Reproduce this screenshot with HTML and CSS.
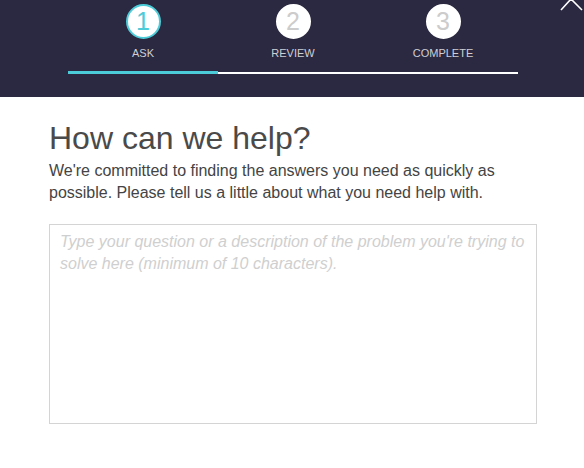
FILE: index.html
```html
<!DOCTYPE html>
<html>
<head>
<meta charset="utf-8">
<link rel="stylesheet" href="styles.css">
</head>
<body>
<header class="top">
  <div class="steps">
    <div class="step active">
      <div class="circle">1</div>
      <div class="label">ASK</div>
    </div>
    <div class="step">
      <div class="circle">2</div>
      <div class="label">REVIEW</div>
    </div>
    <div class="step">
      <div class="circle">3</div>
      <div class="label">COMPLETE</div>
    </div>
  </div>
  <div class="progress">
    <div class="fill"></div>
    <div class="track"></div>
  </div>
  <svg class="close" width="24" height="12" viewBox="0 0 24 12">
    <path d="M1 10 L11 -1 M11 -1 L22 10" stroke="#ffffff" stroke-width="1.6" fill="none"/>
  </svg>
</header>
<main class="content">
  <h1 class="title">How can we help?</h1>
  <p class="intro">We're committed to finding the answers you need as quickly as possible. Please tell us a little about what you need help with.</p>
  <textarea class="question" placeholder="Type your question or a description of the problem you're trying to solve here (minimum of 10 characters)."></textarea>
</main>
</body>
</html>
```
FILE: styles.css
```css
html, body {
  margin: 0;
  padding: 0;
  background: #ffffff;
  font-family: "Liberation Sans", Arial, sans-serif;
}
.top {
  position: relative;
  height: 97px;
  background: #2b2941;
  padding-left: 68px;
  box-sizing: border-box;
  padding-top: 4px;
}
.steps {
  display: flex;
  width: 450px;
}
.step {
  flex: 1;
  display: flex;
  flex-direction: column;
  align-items: center;
}
.circle {
  width: 35px;
  height: 35px;
  box-sizing: border-box;
  border-radius: 50%;
  background: #ffffff;
  border: 2px solid #ffffff;
  color: #cccccc;
  font-size: 25px;
  line-height: 31px;
  text-align: center;
}
.step.active .circle {
  border-color: #4ccbd8;
  color: #4ccbd8;
}
.label {
  margin-top: 8px;
  font-size: 11px;
  line-height: 13px;
  color: #cfcfd4;
}
.progress {
  display: flex;
  align-items: center;
  width: 450px;
  margin-top: 11px;
  height: 3px;
}
.fill {
  width: 150px;
  height: 3px;
  background: #4ccbd8;
}
.track {
  flex: 1;
  height: 2px;
  background: #ffffff;
}
.close {
  position: absolute;
  right: 0;
  top: 0;
}
.content {
  padding: 22px 47px 0 49px;
}
.title {
  margin: 0;
  font-size: 32px;
  font-weight: normal;
  line-height: 38px;
  color: #4a4a4a;
}
.intro {
  margin: 3px 0 0;
  font-size: 16px;
  line-height: 22px;
  color: #444444;
  width: 470px;
}
.question {
  display: block;
  margin-top: 20px;
  width: 488px;
  height: 200px;
  box-sizing: border-box;
  border: 1px solid #d4d4d4;
  padding: 6px 10px;
  font-family: "Liberation Sans", Arial, sans-serif;
  font-size: 16px;
  line-height: 22px;
  resize: none;
  outline: none;
}
.question::placeholder {
  color: #cfcfcf;
  font-style: italic;
}
```
